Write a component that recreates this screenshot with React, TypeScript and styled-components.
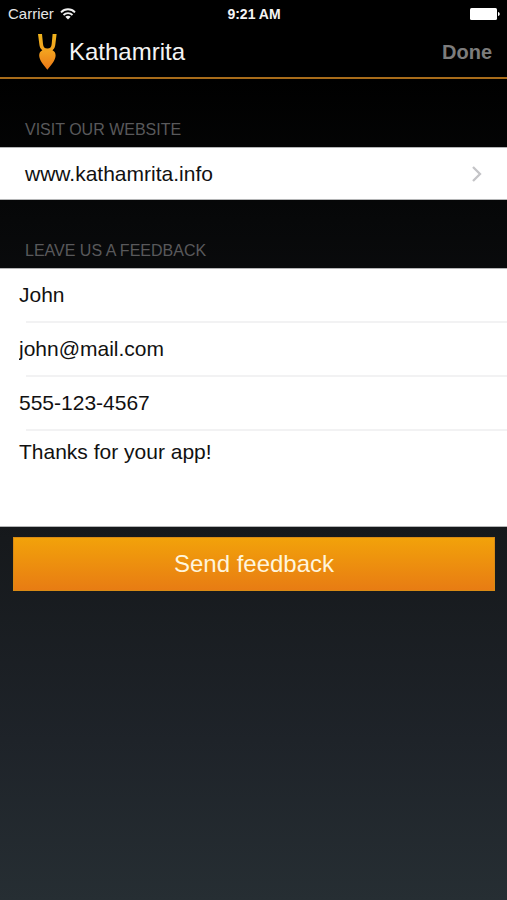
import React from "react";
import styled, { createGlobalStyle } from "styled-components";

const GlobalStyle = createGlobalStyle`
  *, *::before, *::after { box-sizing: border-box; }
  body {
    margin: 0;
    background: #000;
    font-family: "Liberation Sans", Arial, sans-serif;
  }
`;

const Screen = styled.div`
  min-height: 100vh;
  display: flex;
  flex-direction: column;
  background: linear-gradient(to bottom, #000 80px, #070809 220px, #16191c 540px, #1e2329 740px, #262e33 100%);
`;

const StatusBar = styled.div`
  display: grid;
  grid-template-columns: 1fr auto 1fr;
  align-items: center;
  height: 27px;
  padding: 0 7px 0 8px;
  background: #000;
  color: #e6e6e6;
  font-size: 15px;
`;

const Carrier = styled.div`
  display: flex;
  align-items: center;
  gap: 6px;
`;

const Clock = styled.time`
  color: #f4f4f4;
  font-size: 14px;
  font-weight: 700;
`;

const BatterySlot = styled.div`
  display: flex;
  justify-content: flex-end;
`;

const NavBar = styled.header`
  display: flex;
  align-items: center;
  justify-content: space-between;
  height: 52px;
  padding: 0 15px 0 36px;
  background: #000;
  border-bottom: 2px solid #a86c1a;
`;

const Brand = styled.div`
  display: flex;
  align-items: center;
  gap: 10px;
`;

const Title = styled.h1`
  margin: 0;
  color: #f4f4f4;
  font-size: 24px;
  font-weight: 400;
  line-height: 28px;
`;

const DoneButton = styled.button`
  padding: 0;
  border: 0;
  background: none;
  color: #7c7c7c;
  font: 700 20px/28px "Liberation Sans", Arial, sans-serif;
  cursor: pointer;
`;

const SectionTitle = styled.h2`
  margin: 0;
  padding: 41px 25px 7px;
  color: #59595b;
  font-size: 16px;
  font-weight: 400;
  line-height: 20px;
`;

const LinkRow = styled.a`
  display: flex;
  align-items: center;
  justify-content: space-between;
  height: 53px;
  padding: 0 24px 0 25px;
  border: solid #b4b5b6;
  border-width: 1px 0;
  background: #fff;
  color: #111;
  font-size: 21px;
  text-decoration: none;
`;

const Form = styled.form`
  display: flex;
  flex-direction: column;
`;

const Fields = styled.div`
  display: flex;
  flex-direction: column;
  border: solid #b4b5b6;
  border-width: 1px 0;
  background: #fff;
`;

const TextField = styled.input`
  width: 100%;
  height: 52px;
  padding: 0 19px;
  border: 0;
  outline: 0;
  background: transparent;
  color: #111;
  font: 400 21px/24px "Liberation Sans", Arial, sans-serif;
`;

const Separator = styled.hr`
  width: auto;
  height: 2px;
  margin: 0 0 0 26px;
  border: 0;
  background: #f2f2f3;
`;

const MessageField = styled.textarea`
  display: block;
  width: 100%;
  height: 95px;
  padding: 9px 19px;
  border: 0;
  outline: 0;
  resize: none;
  background: transparent;
  color: #111;
  font: 400 21px/24px "Liberation Sans", Arial, sans-serif;
`;

const SendButton = styled.button`
  height: 54px;
  margin: 10px 12px 0 13px;
  padding: 0;
  border: 1px solid #d98a14;
  background: linear-gradient(to bottom, #f2a20a, #e87c13);
  color: #fff5dc;
  font: 400 24px/28px "Liberation Sans", Arial, sans-serif;
  cursor: pointer;
`;

const WifiIcon = () => (
  <svg width="16" height="12" viewBox="0 0 16 12" fill="none" stroke="#f0f0f0" aria-hidden="true">
    <path d="M1 4.3 C5 .3 11 .3 15 4.3" strokeWidth="1.9" />
    <path d="M3.5 7 C6 4.5 10 4.5 12.5 7" strokeWidth="1.8" />
    <path d="M8 11.5 L5.3 8.8 C6.8 7.4 9.2 7.4 10.7 8.8 Z" fill="#f0f0f0" stroke="none" />
  </svg>
);

const BatteryIcon = () => (
  <svg width="30" height="12" viewBox="0 0 30 12" fill="#fff" aria-hidden="true">
    <rect x="0" y="0" width="27" height="12" rx="1.5" />
    <path d="M28 4 C30.3 4.6 30.3 7.4 28 8 Z" />
  </svg>
);

const LogoIcon = () => (
  <svg width="23" height="38" viewBox="0 0 23 38" aria-hidden="true">
    <defs>
      <linearGradient id="logo" x1="0" y1="0" x2="0" y2="38" gradientUnits="userSpaceOnUse">
        <stop offset="0" stopColor="#eeb41c" />
        <stop offset=".5" stopColor="#f3a01f" />
        <stop offset="1" stopColor="#ea7415" />
      </linearGradient>
    </defs>
    <path
      fill="url(#logo)"
      d="M2 1 H6 L7 11 C7.3 14 8.6 15.6 11.4 15.6 C14.2 15.6 15.4 14 15.7 11 L16.6 1 H20.6 L19.4 11 C19.1 14 18.3 15.8 16.5 17.2 C18.6 18.2 19.6 20 19.6 22.6 C19.6 27.5 15 32 11.4 36.8 C7.8 32 3.2 27.5 3.2 22.6 C3.2 20 4.2 18.2 6.3 17.2 C4.4 15.8 3.6 14 3.3 11 Z"
    />
  </svg>
);

const ChevronIcon = () => (
  <svg width="12" height="18" viewBox="0 0 12 18" fill="none" stroke="#c4c4c7" strokeWidth="2.3" aria-hidden="true">
    <path d="M2 2 L9 9 L2 16" />
  </svg>
);

export default function App() {
  return (
    <Screen>
      <GlobalStyle />
      <StatusBar>
        <Carrier>
          <span>Carrier</span>
          <WifiIcon />
        </Carrier>
        <Clock>9:21 AM</Clock>
        <BatterySlot>
          <BatteryIcon />
        </BatterySlot>
      </StatusBar>
      <NavBar>
        <Brand>
          <LogoIcon />
          <Title>Kathamrita</Title>
        </Brand>
        <DoneButton type="button">Done</DoneButton>
      </NavBar>
      <main>
        <section>
          <SectionTitle>VISIT OUR WEBSITE</SectionTitle>
          <LinkRow href="#website">
            <span>www.kathamrita.info</span>
            <ChevronIcon />
          </LinkRow>
        </section>
        <Form onSubmit={(event: React.FormEvent) => event.preventDefault()}>
          <SectionTitle>LEAVE US A FEEDBACK</SectionTitle>
          <Fields>
            <TextField type="text" name="name" aria-label="Name" defaultValue="John" />
            <Separator />
            <TextField type="email" name="email" aria-label="Email" defaultValue="john@mail.com" />
            <Separator />
            <TextField type="tel" name="phone" aria-label="Phone" defaultValue="555-123-4567" />
            <Separator />
            <MessageField name="message" aria-label="Message" defaultValue="Thanks for your app!" />
          </Fields>
          <SendButton type="submit">Send feedback</SendButton>
        </Form>
      </main>
    </Screen>
  );
}
